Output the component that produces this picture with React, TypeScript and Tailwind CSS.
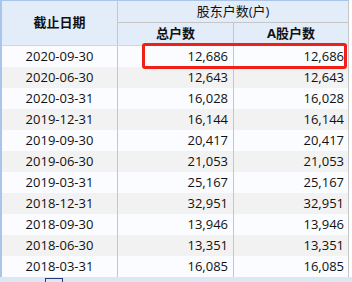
import React from "react";

const rows = [
  ["2020-09-30", "12,686", "12,686"],
  ["2020-06-30", "12,643", "12,643"],
  ["2020-03-31", "16,028", "16,028"],
  ["2019-12-31", "16,144", "16,144"],
  ["2019-09-30", "20,417", "20,417"],
  ["2019-06-30", "21,053", "21,053"],
  ["2019-03-31", "25,167", "25,167"],
  ["2018-12-31", "32,951", "32,951"],
  ["2018-09-30", "13,946", "13,946"],
  ["2018-06-30", "13,351", "13,351"],
  ["2018-03-31", "16,085", "16,085"],
];

export default function App() {
  return (
    <div
      className="relative w-[352px] h-[282px] overflow-hidden bg-white text-[13px] text-[#111]"
      style={{ fontFamily: '"Open Sans", "Noto Sans CJK SC", sans-serif' }}
    >
      <div className="w-[349px] border-l-2 border-t border-[#a9c6ea]">
        {/* header */}
        <div className="flex h-[45px] bg-[#e3edf9] border-b border-[#c9d7e8]">
          <div className="w-[116px] flex items-center justify-center font-bold border-r border-[#c6c6c6]">
            截止日期
          </div>
          <div className="flex-1 flex flex-col border-r border-[#c6c6c6]">
            <div className="h-[22px] flex items-center justify-center border-b border-[#c6c6c6]">
              股东户数(户)
            </div>
            <div className="flex-1 flex">
              <div className="w-[116px] flex items-center justify-center font-bold border-r border-[#c6c6c6]">
                总户数
              </div>
              <div className="flex-1 flex items-center justify-center font-bold">A股户数</div>
            </div>
          </div>
        </div>
        {/* body */}
        {rows.map((r, i) => (
          <div
            key={r[0]}
            className={`flex h-[21px] leading-[21px] ${i % 2 === 0 ? "bg-[#fafcff]" : "bg-[#f2f2f2]"}`}
          >
            <div className="w-[116px] text-center border-r border-[#c6c6c6]">{r[0]}</div>
            <div className="w-[116px] text-right pr-[5px] border-r border-[#c6c6c6]">{r[1]}</div>
            <div className="flex-1 text-right pr-[4px] border-r border-[#c6c6c6]">{r[2]}</div>
          </div>
        ))}
      </div>
      {/* bottom scroll strip */}
      <div className="h-[6px] bg-[#dce7f4] relative">
        <div className="absolute left-[45px] top-[1px] w-[18px] h-[6px] border border-[#2a3a7a]" />
      </div>
      {/* highlight */}
      <div className="absolute left-[142px] top-[43px] w-[205px] h-[26px] border-[3px] border-[#f02018] rounded-[3px]" />
    </div>
  );
}
